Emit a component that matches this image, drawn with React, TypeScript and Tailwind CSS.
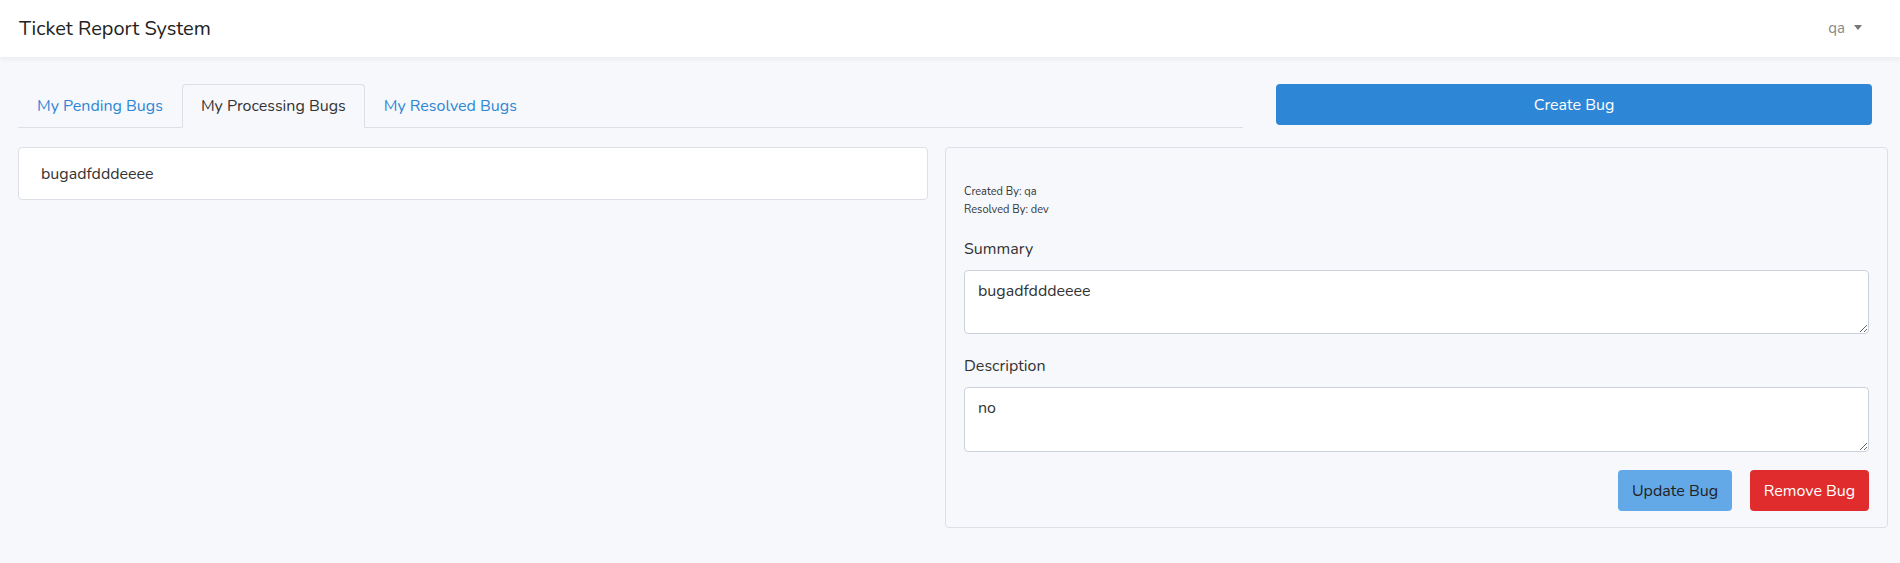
import { useState } from "react";

const tabs = ["My Pending Bugs", "My Processing Bugs", "My Resolved Bugs"];

export default function App() {
  const [active, setActive] = useState(1);
  const [summary, setSummary] = useState("bugadfdddeeee");
  const [description, setDescription] = useState("no");

  return (
    <div
      className="min-h-[563px] bg-[#f7f8fc] text-[#212529]"
      style={{ fontFamily: "Nunito, Lato, 'Open Sans', sans-serif" }}
    >
      <header className="relative z-10 flex h-[57px] items-center justify-between bg-white pl-[19px] pr-[38px] shadow-[0_2px_5px_rgba(0,0,0,0.06)]">
        <span className="text-[20px] text-[#222]">Ticket Report System</span>
        <button className="flex items-center gap-[9px] text-[15px] text-[#888]">
          qa
          <span className="mt-[-2px] h-0 w-0 border-x-[4px] border-t-[5px] border-x-transparent border-t-[#777]" />
        </button>
      </header>

      <main className="pl-[18px] pr-3 pt-[27px]">
        <div className="flex items-start">
          <nav className="flex w-[1225px] border-b border-[#dcdfe5]">
            {tabs.map((t, i) => (
              <button
                key={t}
                onClick={() => setActive(i)}
                className={
                  i === active
                    ? "-mb-px h-[44px] rounded-t-[4px] border border-b-[#f7f8fc] border-[#dcdfe5] bg-[#f7f8fc] px-[18px] text-[16px] text-[#333]"
                    : "-mb-px h-[44px] border border-transparent px-[18px] text-[16px] text-[#2e86d6]"
                }
              >
                {t}
              </button>
            ))}
          </nav>
          <button className="ml-[33px] h-[41px] w-[596px] rounded-[4px] bg-[#2e86d6] text-[16px] text-white">
            Create Bug
          </button>
        </div>

        <div className="mt-[19px] flex items-start gap-[17px]">
          <div className="flex h-[53px] w-[910px] items-center rounded-[4px] border border-[#dcdfe5] bg-white px-[22px] text-[16px] text-[#333]">
            bugadfdddeeee
          </div>

          <div className="w-[943px] rounded-[4px] border border-[#dcdfe5] bg-[#f7f8fc] px-[18px] pb-[16px] pt-[35px]">
            <div className="text-[11px] leading-[18px] text-[#333]">
              <p>Created By: qa</p>
              <p>Resolved By: dev</p>
            </div>

            <label className="mt-[18px] block text-[16px] text-[#333]">Summary</label>
            <textarea
              value={summary}
              onChange={(e) => setSummary(e.target.value)}
              className="mt-[9px] block h-[64px] w-full rounded-[4px] border border-[#ccd2db] bg-white px-[13px] py-[8px] text-[16px] text-[#333] outline-none"
            />

            <label className="mt-[20px] block text-[16px] text-[#333]">Description</label>
            <textarea
              value={description}
              onChange={(e) => setDescription(e.target.value)}
              className="mt-[9px] block h-[65px] w-full rounded-[4px] border border-[#ccd2db] bg-white px-[13px] py-[8px] text-[16px] text-[#333] outline-none"
            />

            <div className="mt-[18px] flex justify-end gap-[18px]">
              <button className="h-[41px] w-[114px] rounded-[4px] bg-[#63a9e8] text-[16px] text-[#222]">
                Update Bug
              </button>
              <button className="h-[41px] w-[119px] rounded-[4px] bg-[#e02c2c] text-[16px] text-white">
                Remove Bug
              </button>
            </div>
          </div>
        </div>
      </main>
    </div>
  );
}
